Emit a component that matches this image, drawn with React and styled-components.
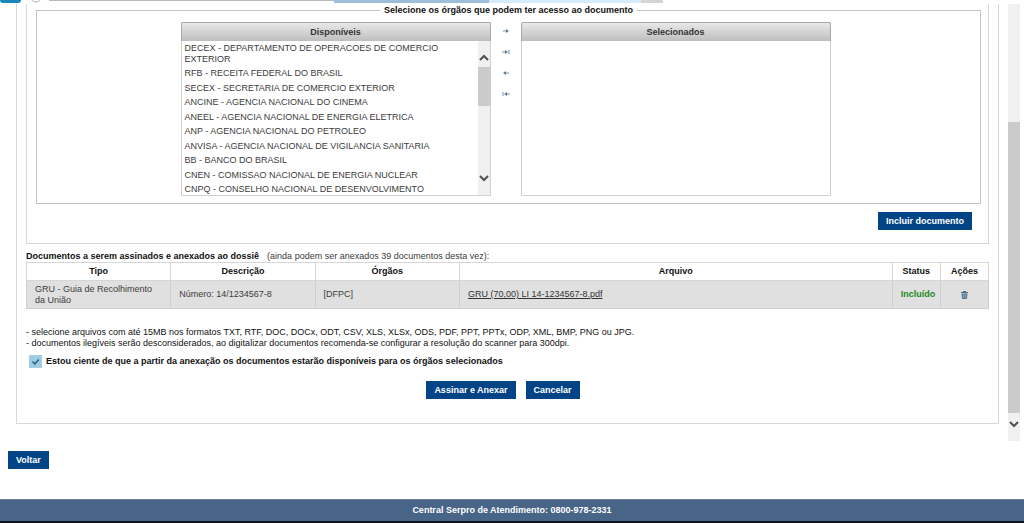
import React from 'react';
import styled, { createGlobalStyle } from 'styled-components';

const GlobalStyle = createGlobalStyle`
  * {
    box-sizing: border-box;
  }
  body {
    margin: 0;
    background: #fff;
    color: #111;
    font-family: "Liberation Sans", Arial, sans-serif;
    font-size: 9px;
    line-height: 11px;
  }
  button, input {
    font: inherit;
  }
`;

const Page = styled.div`
  display: flex;
  flex-direction: column;
  min-height: 100vh;
`;

// bottom edge of the browser bar
const TopBar = styled.div`
  display: flex;
  align-items: flex-start;
  height: 4px;
`;

const BackTab = styled.div`
  width: 21px;
  height: 3px;
  border-radius: 0 0 4px 4px;
  background: #1787bd;
`;

const ForwardRing = styled.svg`
  width: 12px;
  height: 3px;
  margin: 0 7px 0 9px;
`;

const BarPiece = styled.div`
  flex: ${(p) => p.$grow} 0 0;
  height: ${(p) => p.$h || 3}px;
  background: ${(p) => p.$color};
`;

const Main = styled.main`
  display: flex;
  padding-right: 4px;
`;

const Column = styled.div`
  flex: 1;
  padding: 0 9px 0 16px;
`;

const Panel = styled.section`
  padding: 0 9px 24px;
  border: solid #d8d8d8;
  border-width: 0 1px 1px;
`;

const Upload = styled.div`
  padding: 1px 7px 13px 9px;
  border: solid #d8d8d8;
  border-width: 0 1px 1px;
`;

const Fieldset = styled.fieldset`
  margin: 0;
  padding: 6px 0 7px;
  border: 1px solid #c4c4c4;
`;

const Legend = styled.legend`
  margin: 0 auto;
  padding: 0 4px;
  font-weight: bold;
`;

const PickList = styled.div`
  display: grid;
  grid-template-columns: 310px 30px 310px;
  justify-content: center;
  margin-right: 6px;
`;

const ListBox = styled.div`
  display: flex;
  flex-direction: column;
  height: 174px;
  border: 1px solid #d0d0d0;
  border-radius: 2px 2px 0 0;
`;

const ListTitle = styled.div`
  padding: 3px 0;
  border: solid #a9a9a9;
  border-width: 1px 1px 0;
  margin: -1px -1px 0;
  border-radius: 2px 2px 0 0;
  background: linear-gradient(#e8e8e8, #bebebe);
  color: #333;
  font-weight: bold;
  text-align: center;
  line-height: 12px;
`;

const ListBody = styled.div`
  display: flex;
  flex: 1;
  min-height: 0;
`;

const Items = styled.ul`
  flex: 1;
  margin: 0;
  padding: 2px 20px 0 3px;
  overflow: hidden;
  list-style: none;
  color: #3c3c3c;
`;

const Item = styled.li`
  padding: 0 0 3px;
  line-height: 11px;
  &:nth-child(even) {
    padding-bottom: 4px;
  }
`;

const Scroll = styled.div`
  display: flex;
  flex-direction: column;
  align-items: center;
  width: 12px;
  background: #f0f0f0;
  svg {
    width: 10px;
    height: 7px;
    fill: none;
    stroke: #505050;
    stroke-width: 2;
  }
`;

const InnerScroll = styled(Scroll)`
  padding: 13px 0;
`;

const PageScroll = styled(Scroll)`
  padding-bottom: 13px;
  height: 437px;
`;

const Thumb = styled.div`
  width: 12px;
  height: ${(p) => p.$h}px;
  margin: ${(p) => p.$top}px 0 auto;
  background: #cbcbcb;
`;

const Arrows = styled.div`
  display: flex;
  flex-direction: column;
  align-items: center;
  gap: 11px;
  padding-top: 4px;
`;

const IconButton = styled.button`
  display: flex;
  justify-content: center;
  align-items: center;
  width: 10px;
  height: 10px;
  margin: 0;
  padding: 0;
  border: 0;
  background: none;
`;

const Actions = styled.div`
  display: flex;
  justify-content: ${(p) => p.$align};
  gap: 10px;
  padding: ${(p) => p.$pad};
`;

const Button = styled.button`
  height: 18px;
  padding: 0 8px;
  border: 0;
  background: #024486;
  color: #fff;
  font-weight: bold;
`;

const Caption = styled.div`
  display: flex;
  gap: 8px;
  padding: 7px 0 0;
  color: #3c3c3c;
  strong {
    color: #111;
  }
`;

const Table = styled.table`
  width: 100%;
  table-layout: fixed;
  border-collapse: collapse;
  border: 1px solid #cfcfcf;
`;

const Th = styled.th`
  width: ${(p) => p.$w || 'auto'};
  height: 18px;
  padding: 0;
  border: 1px solid #d6d6d6;
`;

const Td = styled.td`
  height: 28px;
  padding: 0 8px;
  border: 1px solid #cfcfcf;
  background: #e0e0e0;
  color: #3c3c3c;
  a {
    color: #333;
  }
`;

const Status = styled.span`
  color: #1b8a1b;
  font-weight: bold;
`;

const Notes = styled.p`
  margin: 18px 0 6px;
`;

const Agree = styled.label`
  display: flex;
  align-items: center;
  gap: 4px;
  padding-left: 3px;
  font-weight: bold;
`;

const Check = styled.input`
  appearance: none;
  width: 13px;
  height: 13px;
  margin: 0;
  border: 1px solid #a9cfe4;
  background: #9ccbe4;
  &:checked {
    background: #9ccbe4 url("data:image/svg+xml,%3Csvg xmlns='http://www.w3.org/2000/svg' viewBox='0 0 11 11'%3E%3Cpath d='M2.5 5.5l2.3 2.5 4-4.5' fill='none' stroke='%23356885' stroke-width='1.8'/%3E%3C/svg%3E");
  }
`;

const Footer = styled.footer`
  padding: 5px 0;
  margin-top: auto;
  border-top: 1px solid #6f7f90;
  border-bottom: 2px solid #10131c;
  background: #486487;
  color: #fff;
  font-weight: bold;
  line-height: 11px;
  text-align: center;
`;

const orgaos = [
  'DECEX - DEPARTAMENTO DE OPERACOES DE COMERCIO EXTERIOR',
  'RFB - RECEITA FEDERAL DO BRASIL',
  'SECEX - SECRETARIA DE COMERCIO EXTERIOR',
  'ANCINE - AGENCIA NACIONAL DO CINEMA',
  'ANEEL - AGENCIA NACIONAL DE ENERGIA ELETRICA',
  'ANP - AGENCIA NACIONAL DO PETROLEO',
  'ANVISA - AGENCIA NACIONAL DE VIGILANCIA SANITARIA',
  'BB - BANCO DO BRASIL',
  'CNEN - COMISSAO NACIONAL DE ENERGIA NUCLEAR',
  'CNPQ - CONSELHO NACIONAL DE DESENVOLVIMENTO',
];

const moves = [
  { label: 'Adicionar', line: 'M1 3h4', head: 'M4 1l3 2-3 2z' },
  { label: 'Adicionar todos', line: 'M0 3h4M7 1v4', head: 'M3 1l3 2-3 2z' },
  { label: 'Remover', line: 'M3 3h4', head: 'M4 1L1 3l3 2z' },
  { label: 'Remover todos', line: 'M4 3h4M1 1v4', head: 'M5 1L2 3l3 2z' },
];

const Chevron = ({ up }) => (
  <svg viewBox="0 0 10 7" aria-hidden="true">
    <path d={up ? 'M1 6l4-4 4 4' : 'M1 1l4 4 4-4'} />
  </svg>
);

export default function App() {
  return (
    <Page>
      <GlobalStyle />
      <TopBar>
        <BackTab />
        <ForwardRing viewBox="0 0 12 3">
          <circle cx="6" cy="-4" r="6" fill="none" stroke="#b5b5b5" />
        </ForwardRing>
        <BarPiece $grow={285} $h={1} $color="#b9b9b9" />
        <BarPiece $grow={155} $color="#9dbdd8" />
        <BarPiece $grow={153} $color="#d6ebfb" />
        <BarPiece $grow={22} $color="#d5d5d5" />
        <BarPiece $grow={361} $color="#fff" />
      </TopBar>
      <Main>
        <Column>
          <Panel>
            <Upload>
              <Fieldset>
                <Legend>Selecione os órgãos que podem ter acesso ao documento</Legend>
                <PickList>
                  <ListBox>
                    <ListTitle>Disponíveis</ListTitle>
                    <ListBody>
                      <Items>
                        {orgaos.map((nome) => (
                          <Item key={nome}>{nome}</Item>
                        ))}
                      </Items>
                      <InnerScroll>
                        <Chevron up />
                        <Thumb $h={39} $top={6} />
                        <Chevron />
                      </InnerScroll>
                    </ListBody>
                  </ListBox>
                  <Arrows>
                    {moves.map((m) => (
                      <IconButton key={m.label} type="button" aria-label={m.label}>
                        <svg width="8" height="6" viewBox="0 0 8 6">
                          <path d={m.line} stroke="#7891a6" />
                          <path d={m.head} fill="#5f7d95" />
                        </svg>
                      </IconButton>
                    ))}
                  </Arrows>
                  <ListBox>
                    <ListTitle>Selecionados</ListTitle>
                  </ListBox>
                </PickList>
              </Fieldset>
              <Actions $align="flex-end" $pad="8px 9px 0 0">
                <Button type="button">Incluir documento</Button>
              </Actions>
            </Upload>
            <Caption>
              <strong>Documentos a serem assinados e anexados ao dossiê</strong>
              <span>(ainda podem ser anexados 39 documentos desta vez):</span>
            </Caption>
            <Table>
              <thead>
                <tr>
                  <Th $w="15%">Tipo</Th>
                  <Th $w="15%">Descrição</Th>
                  <Th $w="15%">Órgãos</Th>
                  <Th>Arquivo</Th>
                  <Th $w="5%">Status</Th>
                  <Th $w="5%">Ações</Th>
                </tr>
              </thead>
              <tbody>
                <tr>
                  <Td>GRU - Guia de Recolhimento da União</Td>
                  <Td>Número: 14/1234567-8</Td>
                  <Td>[DFPC]</Td>
                  <Td>
                    <a href="#arquivo">GRU (70,00) LI 14-1234567-8.pdf</a>
                  </Td>
                  <Td>
                    <Status>Incluído</Status>
                  </Td>
                  <Td align="center">
                    <IconButton type="button" aria-label="Excluir">
                      <svg width="7" height="8" viewBox="0 0 7 8">
                        <path d="M0 1h2V0h3v1h2v1H0z" fill="#4a6c88" />
                        <path d="M.5 2.5h6L6 8H1z" fill="#5b7d99" />
                        <path d="M2.5 3.5v3.5M4.5 3.5v3.5" stroke="#a9bccb" strokeWidth=".6" />
                      </svg>
                    </IconButton>
                  </Td>
                </tr>
              </tbody>
            </Table>
            <Notes>
              - selecione arquivos com até 15MB nos formatos TXT, RTF, DOC, DOCx, ODT, CSV, XLS, XLSx, ODS, PDF, PPT, PPTx, ODP, XML, BMP, PNG ou JPG.
              <br />
              - documentos ilegíveis serão desconsiderados, ao digitalizar documentos recomenda-se configurar a resolução do scanner para 300dpi.
            </Notes>
            <Agree>
              <Check type="checkbox" defaultChecked />
              Estou ciente de que a partir da anexação os documentos estarão disponíveis para os órgãos selecionados
            </Agree>
            <Actions $align="center" $pad="13px 9px 0 0">
              <Button type="button">Assinar e Anexar</Button>
              <Button type="button">Cancelar</Button>
            </Actions>
          </Panel>
        </Column>
        <PageScroll>
          <Thumb $h={291} $top={118} />
          <Chevron />
        </PageScroll>
      </Main>
      <Actions $align="flex-start" $pad="10px 8px 29px">
        <Button type="button">Voltar</Button>
      </Actions>
      <Footer>Central Serpro de Atendimento: 0800-978-2331</Footer>
    </Page>
  );
}
